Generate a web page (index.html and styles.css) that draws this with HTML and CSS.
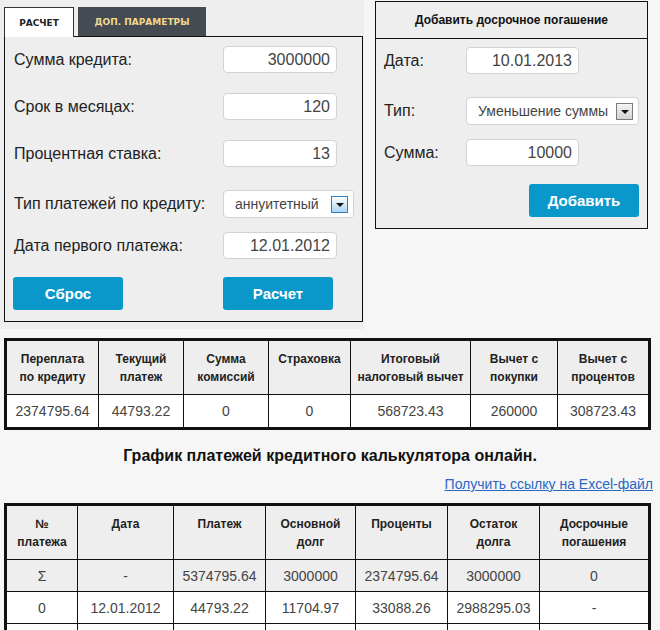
FILE: index.html
```html
<!DOCTYPE html>
<html lang="ru">
<head>
<meta charset="utf-8">
<title>Кредитный калькулятор</title>
<link rel="stylesheet" href="styles.css">
</head>
<body>
<div class="top">
  <div class="calc">
    <div class="tabs">
      <div class="tab tab-active">РАСЧЕТ</div>
      <div class="tab tab-dark">ДОП. ПАРАМЕТРЫ</div>
    </div>
    <div class="form">
      <div class="row"><span class="label">Сумма кредита:</span><span class="input">3000000</span></div>
      <div class="row"><span class="label">Срок в месяцах:</span><span class="input">120</span></div>
      <div class="row"><span class="label">Процентная ставка:</span><span class="input">13</span></div>
      <div class="row row-select"><span class="label">Тип платежей по кредиту:</span><span class="select select-left"><span class="select-text">аннуитетный</span><span class="arrow arrow-blue"></span></span></div>
      <div class="row row-last"><span class="label">Дата первого платежа:</span><span class="input">12.01.2012</span></div>
      <div class="buttons"><span class="btn">Сброс</span><span class="btn btn-second">Расчет</span></div>
    </div>
  </div>
  <div class="early">
    <div class="early-head">Добавить досрочное погашение</div>
    <div class="early-body">
      <div class="row"><span class="label label-short">Дата:</span><span class="input input-right">10.01.2013</span></div>
      <div class="row row-select"><span class="label label-short">Тип:</span><span class="select select-right"><span class="select-text">Уменьшение суммы</span><span class="arrow arrow-gray"></span></span></div>
      <div class="row row-last"><span class="label label-short">Сумма:</span><span class="input input-right">10000</span></div>
      <div class="buttons buttons-end"><span class="btn">Добавить</span></div>
    </div>
  </div>
</div>

<table class="grid summary">
  <thead>
    <tr>
      <th class="s1">Переплата<br>по кредиту</th>
      <th class="s2">Текущий<br>платеж</th>
      <th class="s3">Сумма<br>комиссий</th>
      <th class="s4">Страховка</th>
      <th class="s5">Итоговый<br>налоговый вычет</th>
      <th class="s6">Вычет с<br>покупки</th>
      <th class="s7">Вычет с<br>процентов</th>
    </tr>
  </thead>
  <tbody>
    <tr>
      <td>2374795.64</td><td>44793.22</td><td>0</td><td>0</td><td>568723.43</td><td>260000</td><td>308723.43</td>
    </tr>
  </tbody>
</table>

<h2 class="title">График платежей кредитного калькулятора онлайн.</h2>
<div class="link-line"><a class="excel" href="#">Получить ссылку на Excel-файл</a></div>

<table class="grid schedule">
  <thead>
    <tr>
      <th class="c1">№<br>платежа</th>
      <th class="c2">Дата</th>
      <th class="c3">Платеж</th>
      <th class="c4">Основной<br>долг</th>
      <th class="c5">Проценты</th>
      <th class="c6">Остаток<br>долга</th>
      <th class="c7">Досрочные<br>погашения</th>
    </tr>
  </thead>
  <tbody>
    <tr class="sum">
      <td>Σ</td><td>-</td><td>5374795.64</td><td>3000000</td><td>2374795.64</td><td>3000000</td><td>0</td>
    </tr>
    <tr>
      <td>0</td><td>12.01.2012</td><td>44793.22</td><td>11704.97</td><td>33088.26</td><td>2988295.03</td><td>-</td>
    </tr>
    <tr class="next">
      <td></td><td></td><td></td><td></td><td></td><td></td><td></td>
    </tr>
  </tbody>
</table>
</body>
</html>
```

FILE: styles.css
```css
html {
  overflow: hidden;
}

body {
  margin: 0;
  background: #f6f6f6;
  font-family: "Liberation Sans", Arial, sans-serif;
  color: #222;
}

.top {
  display: flex;
  align-items: flex-start;
}

/* left calculator */
.calc {
  width: 360px;
  padding: 7px 0 7px 4px;
  background: #eeeeee;
}

.tabs {
  display: flex;
  align-items: flex-start;
  gap: 4px;
  height: 29px;
}

.tab {
  box-sizing: border-box;
  display: flex;
  align-items: center;
  justify-content: center;
  font-family: "DejaVu Sans", Verdana, sans-serif;
  font-weight: bold;
  font-size: 9px;
}

.tab-active {
  position: relative;
  z-index: 1;
  width: 70px;
  height: 30px;
  background: #fff;
  border: 1px solid #333;
  border-bottom: none;
  color: #222;
}

.tab-dark {
  width: 128px;
  height: 29px;
  background: #454b52;
  color: #f2d88e;
}

.form {
  box-sizing: border-box;
  display: flex;
  flex-direction: column;
  width: 359px;
  border: 1px solid #111;
  padding: 9px 8px 11px 9px;
}

.row {
  display: flex;
  align-items: center;
  height: 27px;
  margin-bottom: 20px;
}

.row-select {
  height: 28px;
  margin-top: 3px;
  margin-bottom: 14px;
}

.row-last {
  margin-bottom: 18px;
}

.label {
  width: 209px;
  flex: none;
  font-size: 16px;
  color: #222;
}

.label-short {
  width: 82px;
}

.input {
  box-sizing: border-box;
  width: 114px;
  height: 27px;
  background: #fff;
  border: 1px solid #d2d2d2;
  border-radius: 4px;
  padding-right: 6px;
  text-align: right;
  font-size: 16px;
  line-height: 25px;
  color: #444;
}

.input-right {
  width: 113px;
}

.select {
  box-sizing: border-box;
  display: flex;
  align-items: center;
  justify-content: space-between;
  height: 28px;
  background: #fff;
  border: 1px solid #d2d2d2;
  border-radius: 4px;
  padding: 0 5px 0 11px;
  font-size: 14px;
  color: #444;
  white-space: nowrap;
}

.select-text {
  white-space: nowrap;
}

.select-left {
  width: 131px;
}

.select-right {
  width: 173px;
}

.arrow {
  box-sizing: border-box;
  flex: none;
  display: flex;
  align-items: center;
  justify-content: center;
  width: 17px;
  height: 17px;
}

.arrow::after {
  content: "";
  border-left: 4px solid transparent;
  border-right: 4px solid transparent;
  border-top: 4px solid #111;
  margin-top: 1px;
}

.arrow-blue {
  border: 1px solid #2f7fc1;
  background: linear-gradient(#ffffff, #a9d5f3);
}

.arrow-gray {
  border: 1px solid #7a7a7a;
  background: linear-gradient(#f4f4f4, #d4d4d4);
}

.buttons {
  display: flex;
  margin-left: -1px;
}

.buttons-end {
  justify-content: flex-end;
  margin-left: 0;
}

.btn {
  box-sizing: border-box;
  width: 110px;
  height: 33px;
  display: flex;
  align-items: center;
  justify-content: center;
  background: #0a98ca;
  border-radius: 3px;
  color: #fff;
  font-weight: bold;
  font-size: 15px;
}

.btn-second {
  margin-left: 100px;
}

/* right panel */
.early {
  box-sizing: border-box;
  width: 273px;
  margin: 1px 0 0 11px;
  border: 1px solid #111;
  background: #eeeeee;
}

.early-head {
  height: 36px;
  display: flex;
  align-items: center;
  justify-content: center;
  border-bottom: 1px solid #111;
  font-weight: bold;
  font-size: 12px;
  color: #111;
}

.early-body {
  display: flex;
  flex-direction: column;
  padding: 8px 8px 11px 8px;
}

/* tables */
.grid {
  box-sizing: border-box;
  width: 647px;
  margin-left: 4px;
  table-layout: fixed;
  border-collapse: separate;
  border-spacing: 0;
  border: 3px solid #111;
}

.grid th,
.grid td {
  box-sizing: border-box;
  border-right: 1px solid #111;
  border-bottom: 1px solid #111;
  text-align: center;
  padding-left: 2px;
  padding-right: 2px;
}

.grid th:last-child,
.grid td:last-child {
  border-right: none;
}

.grid tbody tr:last-child td {
  border-bottom: none;
}

.grid th {
  background: #eeeeee;
  font-weight: bold;
  font-size: 12px;
  line-height: 18px;
  padding-top: 9px;
  padding-bottom: 8px;
  vertical-align: top;
  color: #222;
}

.grid td {
  background: #fff;
  font-size: 14px;
  line-height: 17px;
  padding-top: 8px;
  padding-bottom: 7px;
  color: #444;
}

.schedule td {
  padding-top: 8px;
  padding-bottom: 6px;
}

.grid tr.next td {
  height: 32px;
}

.grid tr.sum td {
  background: #eeeeee;
}

.summary {
  margin-top: 9px;
}

.s1 { width: 92px; }
.s2 { width: 85px; }
.s3 { width: 85px; }
.s4 { width: 82px; }
.s5 { width: 120px; }
.s6 { width: 87px; }
.s7 { width: 90px; }

.c1 { width: 71px; }
.c2 { width: 96px; }
.c3 { width: 92px; }
.c4 { width: 90px; }
.c5 { width: 92px; }
.c6 { width: 92px; }
.c7 { width: 108px; }

.title {
  margin: 16px 0 0;
  text-align: center;
  font-size: 16px;
  line-height: 20px;
  font-weight: bold;
  color: #111;
}

.link-line {
  margin-top: 9px;
  padding-right: 7px;
  text-align: right;
  font-size: 14px;
  line-height: 18px;
}

.excel {
  color: #2a66c4;
  text-decoration: underline;
}

.schedule {
  margin-top: 10px;
}
```
